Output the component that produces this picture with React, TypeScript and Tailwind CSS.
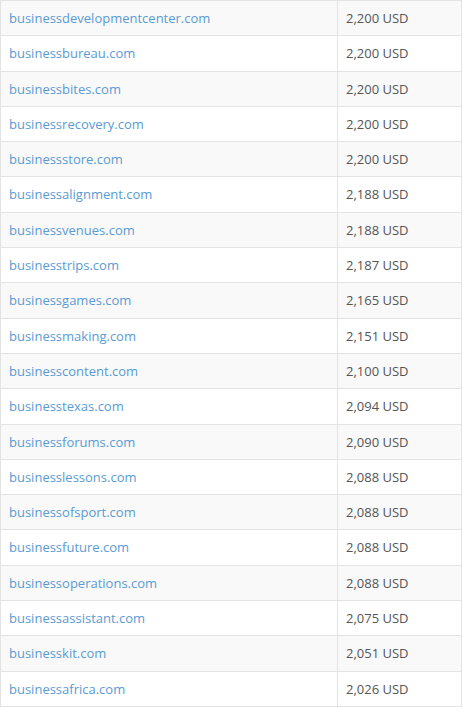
import React from "react";

const rows: [string, string][] = [
  ["businessdevelopmentcenter.com", "2,200 USD"],
  ["businessbureau.com", "2,200 USD"],
  ["businessbites.com", "2,200 USD"],
  ["businessrecovery.com", "2,200 USD"],
  ["businessstore.com", "2,200 USD"],
  ["businessalignment.com", "2,188 USD"],
  ["businessvenues.com", "2,188 USD"],
  ["businesstrips.com", "2,187 USD"],
  ["businessgames.com", "2,165 USD"],
  ["businessmaking.com", "2,151 USD"],
  ["businesscontent.com", "2,100 USD"],
  ["businesstexas.com", "2,094 USD"],
  ["businessforums.com", "2,090 USD"],
  ["businesslessons.com", "2,088 USD"],
  ["businessofsport.com", "2,088 USD"],
  ["businessfuture.com", "2,088 USD"],
  ["businessoperations.com", "2,088 USD"],
  ["businessassistant.com", "2,075 USD"],
  ["businesskit.com", "2,051 USD"],
  ["businessafrica.com", "2,026 USD"],
];

export default function App() {
  return (
    <div className="w-[462px] h-[707px] overflow-hidden bg-white" style={{ fontFamily: '"Open Sans", sans-serif' }}>
      <table className="w-full border-collapse text-[13px] leading-[18.3px]">
        <tbody>
          {rows.map(([d, p], i) => (
            <tr key={d} className={i % 2 === 0 ? "bg-[#f9f9f9]" : "bg-white"}>
              <td className="border border-[#e3e3e3] px-2 py-2 text-[#5a9bd4] w-[337px]">{d}</td>
              <td className="border border-[#e3e3e3] px-2 py-2 text-[#555]">{p}</td>
            </tr>
          ))}
        </tbody>
      </table>
    </div>
  );
}
